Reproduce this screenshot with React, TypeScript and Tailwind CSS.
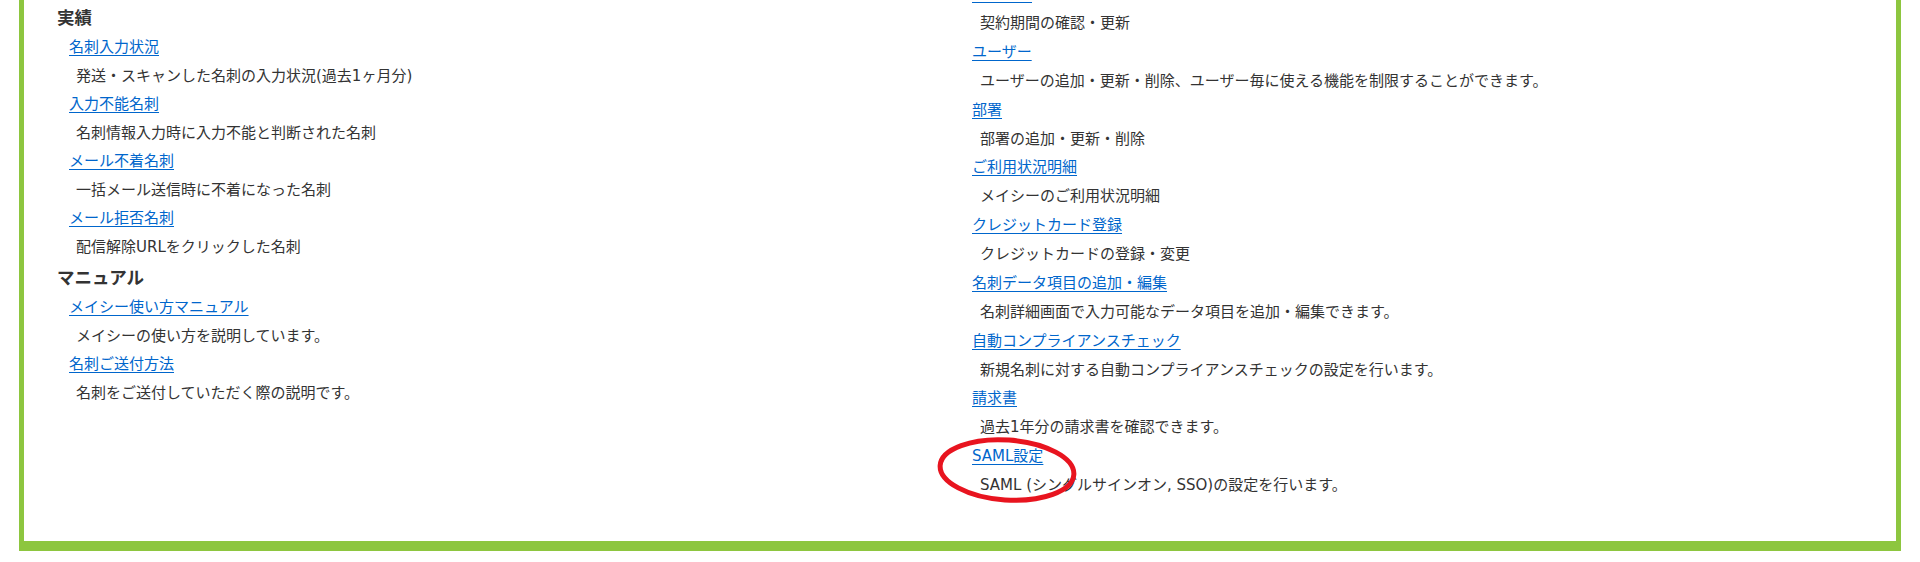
const leftSections = [
  {
    title: "実績",
    items: [
      { link: "名刺入力状況", desc: "発送・スキャンした名刺の入力状況(過去1ヶ月分)" },
      { link: "入力不能名刺", desc: "名刺情報入力時に入力不能と判断された名刺" },
      { link: "メール不着名刺", desc: "一括メール送信時に不着になった名刺" },
      { link: "メール拒否名刺", desc: "配信解除URLをクリックした名刺" },
    ],
  },
  {
    title: "マニュアル",
    items: [
      { link: "メイシー使い方マニュアル", desc: "メイシーの使い方を説明しています。" },
      { link: "名刺ご送付方法", desc: "名刺をご送付していただく際の説明です。" },
    ],
  },
];

const rightItems = [
  { link: "契約情報", desc: "契約期間の確認・更新" },
  { link: "ユーザー", desc: "ユーザーの追加・更新・削除、ユーザー毎に使える機能を制限することができます。" },
  { link: "部署", desc: "部署の追加・更新・削除" },
  { link: "ご利用状況明細", desc: "メイシーのご利用状況明細" },
  { link: "クレジットカード登録", desc: "クレジットカードの登録・変更" },
  { link: "名刺データ項目の追加・編集", desc: "名刺詳細画面で入力可能なデータ項目を追加・編集できます。" },
  { link: "自動コンプライアンスチェック", desc: "新規名刺に対する自動コンプライアンスチェックの設定を行います。" },
  { link: "請求書", desc: "過去1年分の請求書を確認できます。" },
  { link: "SAML設定", desc: "SAML (シングルサインオン, SSO)の設定を行います。" },
];

function MenuLink({ text, clipped }: { text: string; clipped?: boolean }) {
  // clipped: the row sits above the scrolled viewport, only its underline peeks in
  return (
    <div className="h-[29px] leading-[29px] pl-[12px]">
      <a
        href="#"
        className={
          clipped
            ? "relative -top-[7px] text-[#0066cc] underline underline-offset-[10px]"
            : "text-[#0066cc] underline underline-offset-[3px]"
        }
      >
        {text}
      </a>
    </div>
  );
}

export default function App() {
  return (
    <div
      className="relative h-[562px] w-[1920px] overflow-hidden bg-white text-[15px] text-[#333333]"
      style={{ fontFamily: '"DejaVu Sans", "Noto Sans CJK JP", sans-serif' }}
    >
      <div className="mx-[19px] h-[551px] overflow-hidden border-x-[5px] border-b-[10px] border-[#8dc63f]">
        <div className="grid grid-cols-2 px-[33px]">
          {/* left column */}
          <div className="flex flex-col pt-[3.5px]">
            {leftSections.map((sec, i) => (
              <div key={sec.title} className={i > 0 ? "mt-[3px]" : ""}>
                <h2 className="h-[29px] leading-[29px] text-[17.5px] font-bold text-[#333333]">
                  {sec.title}
                </h2>
                {sec.items.map((it) => (
                  <div key={it.link}>
                    <MenuLink text={it.link} />
                    <p className="h-[28px] leading-[28px] pl-[19px]">{it.desc}</p>
                  </div>
                ))}
              </div>
            ))}
          </div>

          {/* right column (scrolled, top cut off) */}
          <div className="-mt-[20px] flex flex-col">
            {rightItems.map((it, i) => (
              <div key={it.link}>
                <MenuLink text={it.link} clipped={i === 0} />
                <p className="h-[28.75px] leading-[28.75px] pl-[20px]">{it.desc}</p>
              </div>
            ))}
          </div>
        </div>
      </div>

      {/* red hand-drawn mark around SAML設定 */}
      <svg
        className="pointer-events-none absolute left-[930px] top-[430px]"
        width="160"
        height="85"
        viewBox="0 0 160 85"
      >
        <ellipse
          cx="77"
          cy="40"
          rx="67"
          ry="30"
          transform="rotate(4 77 40)"
          fill="none"
          stroke="#e8141f"
          strokeWidth="5"
        />
      </svg>
    </div>
  );
}
